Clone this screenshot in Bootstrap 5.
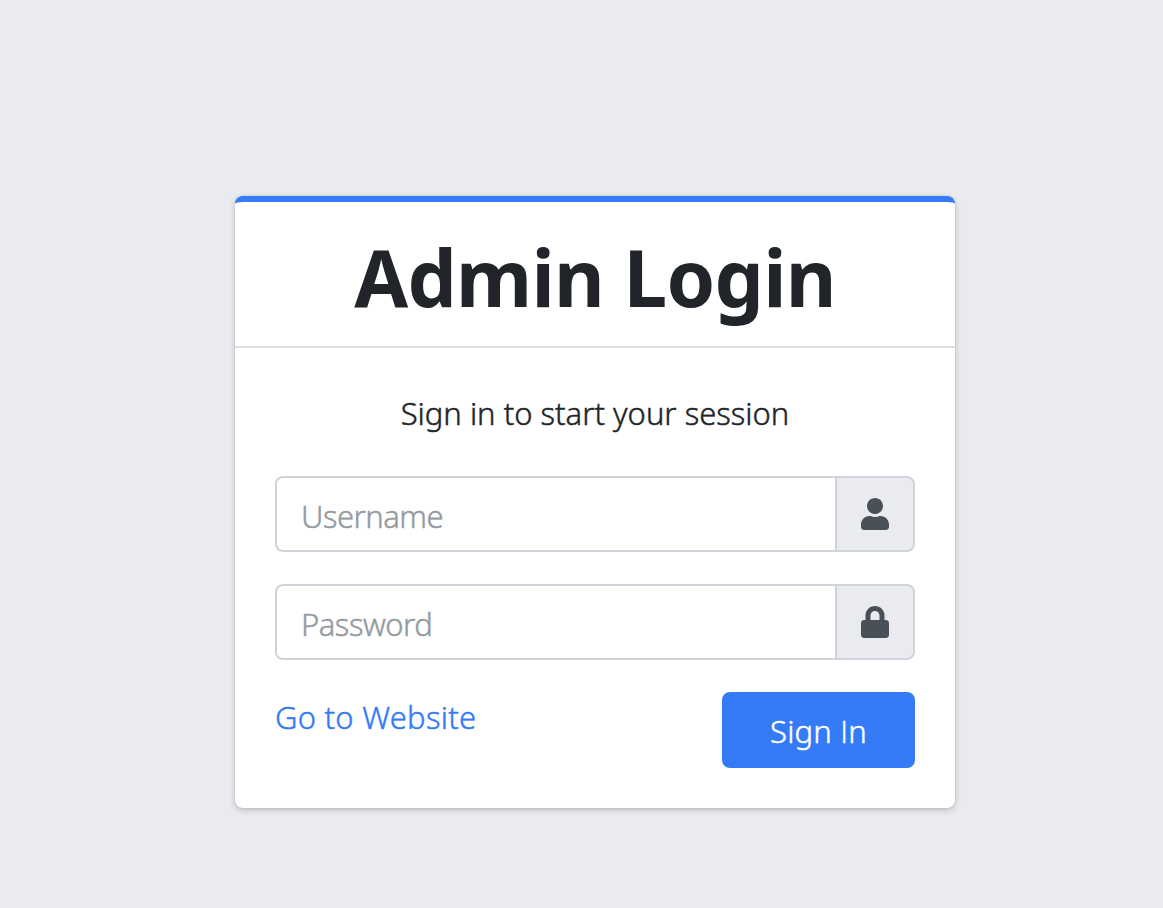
<!DOCTYPE html>
<html lang="en">
<head>
<meta charset="utf-8">
<meta name="viewport" content="width=device-width, initial-scale=1">
<title>Admin Login</title>
<link href="https://cdn.jsdelivr.net/npm/bootstrap@5.3.0/dist/css/bootstrap.min.css" rel="stylesheet">
<style>
  body { background: #eaebef; font-family: "Noto Sans", "Open Sans", sans-serif; font-size: 31px; font-weight: 300; line-height: 48px; color: #212529; }
  .login-page { min-height: 100vh; padding: 196px 0 100px 235px; }
  .login-card { width: 720px; border: 0; border-top: 6px solid #357bf8; border-radius: 8px; box-shadow: 0 0 2px rgba(0,0,0,.125), 0 2px 6px rgba(0,0,0,.2); }
  .login-card .card-header { height: 146px; padding: 27px 0 21px; background: transparent; border-bottom: 2px solid #dfdfdf; }
  .login-title { font-size: 78px; line-height: 96px; font-weight: 700; letter-spacing: -.7px; }
  .login-card .card-body { padding: 40px; -webkit-text-stroke-width: .45px; }
  .login-msg { margin: 0 0 40px; padding-top: 1px; height: 48px; }
  .login-card .input-group { height: 76px; margin-bottom: 32px; }
  .login-card .form-control { border: 2px solid #ced4da; border-right: 0; border-radius: 8px; padding: 4px 24px 0; font-size: 31px; font-weight: 300; line-height: 48px; letter-spacing: -.5px; }
  .login-card .form-control::placeholder { color: #939ba2; }
  .login-card .input-group .input-group-text { width: 80px; margin-left: 0 !important; padding: 0; background: #eaebef; border: 2px solid #ced4da; border-radius: 8px; border-top-left-radius: 0; border-bottom-left-radius: 0; color: #495057; }
  .login-card .input-group-text svg { width: 28px; height: 32px; display: block; }
  .login-link { color: #357bf8; padding-top: 1px; letter-spacing: .25px; }
  .login-btn { width: 193px; height: 76px; padding: 2px 0 0; border: 0; border-radius: 8px; background: #357bf8; font-size: 31px; font-weight: 300; line-height: 48px; letter-spacing: .2px; }
  .plain-cap { font-family: "Open Sans", sans-serif; }
</style>
</head>
<body>
<main class="login-page">
  <div class="card login-card">
    <div class="card-header text-center">
      <h1 class="login-title m-0">Admin Login</h1>
    </div>
    <div class="card-body">
      <p class="text-center login-msg">Sign in to start your session</p>
      <form>
        <div class="input-group">
          <input type="text" class="form-control" placeholder="Username" aria-label="Username">
          <span class="input-group-text justify-content-center">
            <svg viewBox="0 0 448 512" fill="currentColor" aria-hidden="true"><path d="M224 256c70.700 0 128-57.300 128-128S294.700 0 224 0 96 57.300 96 128s57.300 128 128 128zm89.600 32h-16.700c-22.200 10.200-46.900 16-72.900 16s-50.600-5.800-72.900-16h-16.700C60.200 288 0 348.200 0 422.400V464c0 26.500 21.500 48 48 48h352c26.500 0 48-21.500 48-48v-41.600c0-74.200-60.200-134.400-134.400-134.400z"/></svg>
          </span>
        </div>
        <div class="input-group">
          <input type="password" class="form-control" placeholder="Password" aria-label="Password">
          <span class="input-group-text justify-content-center">
            <svg viewBox="0 0 448 512" fill="currentColor" aria-hidden="true"><path d="M400 224h-24v-72C376 68.200 307.800 0 224 0S72 68.200 72 152v72H48c-26.500 0-48 21.500-48 48v192c0 26.500 21.500 48 48 48h352c26.500 0 48-21.500 48-48V272c0-26.500-21.500-48-48-48zm-104 0H152v-72c0-39.700 32.300-72 72-72s72 32.300 72 72v72z"/></svg>
          </span>
        </div>
        <div class="d-flex justify-content-between align-items-start">
          <a href="#" class="login-link text-decoration-none">Go to Website</a>
          <button type="button" class="btn btn-primary login-btn">Sign <span class="plain-cap">I</span>n</button>
        </div>
      </form>
    </div>
  </div>
</main>
<script src="https://cdn.jsdelivr.net/npm/bootstrap@5.3.0/dist/js/bootstrap.bundle.min.js"></script>
</body>
</html>
